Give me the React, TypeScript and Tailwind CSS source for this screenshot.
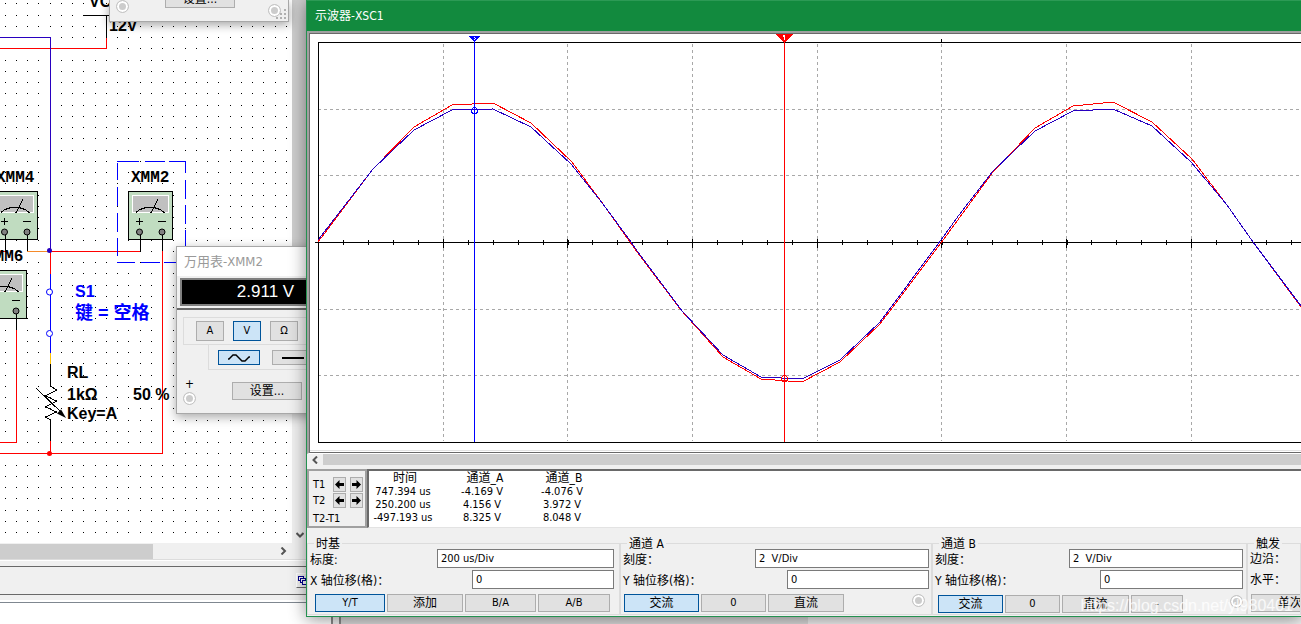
import type { ReactNode } from "react";
import { clsx } from "clsx";

// --- Shared controls ---
interface PushButtonProps {
  active?: boolean;
  className?: string;
  label?: string;
  children: ReactNode;
}

function PushButton({ active, className, label, children }: PushButtonProps) {
  return (
    <button
      type="button"
      aria-label={label}
      className={clsx(
        "flex shrink-0 items-center justify-center border",
        active
          ? "border-[#00549a] bg-[#cce4f7]"
          : "border-[#adadad] bg-[#e1e1e1]",
        className,
      )}
    >
      {children}
    </button>
  );
}

function Terminal({ name }: { name: string }) {
  return (
    <input
      type="radio"
      name={name}
      aria-label={name}
      defaultChecked
      className="size-[13px] shrink-0 appearance-none rounded-full border border-[#c4c4c4] bg-[#cccccc] shadow-[inset_0_0_0_2px_#ffffff]"
    />
  );
}

// --- Schematic ---
const gridDots = () => {
  let d = "";
  for (let i = 0; i < 26; i++) {
    for (let j = 0; j < 48; j++) {
      d += `M${Math.floor(5 + 11.25 * i)} ${Math.floor(3.75 + 11.25 * j)}h1v1h-1z`;
    }
  }
  return d;
};

function MeterSymbol({ x, y, name }: { x: number; y: number; name: string }) {
  return (
    <g transform={`translate(${x} ${y})`}>
      <text
        x="3"
        y="-9"
        className="font-['Liberation_Mono',monospace] text-[16px] font-bold"
      >
        {name}
      </text>
      <g shapeRendering="crispEdges" fill="none" stroke="#000">
        <rect x="0.5" y="0.5" width="44" height="48" fill="#c0dcc0" />
        <rect x="4.5" y="4.5" width="36" height="17" fill="#c0c0c0" stroke="#fff" />
        <path d="M8 21.5 12 18.500 18 16.500h8l6 2 5 3.500M22.5 22.5 30 8.5" />
        <path d="M8 30.5h7M11.5 27v7M30 30.5h8" />
        <path d="M12.5 44v16M34.5 44v16" />
      </g>
      <circle cx="11.5" cy="41" r="3" fill="#808080" stroke="#000" />
      <circle cx="34" cy="41" r="3" fill="#808080" stroke="#000" />
    </g>
  );
}

function Schematic() {
  return (
    <svg
      className="h-full w-full font-['Liberation_Sans',Arial,sans-serif] text-[16px] font-bold"
      role="img"
      aria-label="Circuit"
    >
      <path d={gridDots()} shapeRendering="crispEdges" />
      <g shapeRendering="crispEdges" fill="none">
        <path d="M83 15.5h27M106.5 15v22" stroke="#000" />
        <path d="M0 48.5h106.5v-11M0 251.5h5M50 251.5h90M50.5 252v22" stroke="#f00" />
        <path d="M0 37.5h50.5v213" stroke="#2800c0" />
        <path d="M27 251.5h22" stroke="#f58a2a" />
        <path d="M50.5 274v79" stroke="#00f" />
        <path d="M50.5 353v11" stroke="#ffc000" />
        <path d="M50.5 364v22M50.5 420v21M16.5 318v12" stroke="#000" />
        <path
          d="M50.5 441v12M0 453.5h162.5V251M0 442.5h16.5V330"
          stroke="#f00"
        />
        <path
          d="M50.5 386 56.5 390 45.5 396 56.5 401 45.5 407 56.5 412 45.5 417 50.5 420M36.5 388.5 62 413"
          stroke="#000"
        />
        <path
          d="M117 161.5h22M145 161.5h20M169 161.5h17M117 262.5h18M141 262.5h19M164 262.5h13"
          stroke="#00f"
        />
        <path
          d="M117.5 163v17M117.5 187v19M117.5 213v19M117.5 238v18M185.5 161v12M185.5 180v19M185.5 205v19M185.5 230v18"
          stroke="#00f"
        />
      </g>
      <path d="M66 418 57 413.5 61 409.5z" />
      <circle cx="49.5" cy="250.5" r="2.5" fill="#2800c0" />
      <circle cx="49.5" cy="453.5" r="2.5" fill="#f00" />
      <circle cx="49.5" cy="292" r="3" fill="#fff" stroke="#00f" />
      <circle cx="49.5" cy="333.5" r="3" fill="#fff" stroke="#00f" />
      <MeterSymbol x={128} y={191} name="XMM2" />
      <MeterSymbol x={-7} y={191} name="XMM4" />
      <MeterSymbol x={-18} y={270} name="XMM6" />
      <text x="89" y="7">VCC</text>
      <text x="109" y="31">12V</text>
      <text x="75" y="297" fill="#00f">S1</text>
      <text
        x="75"
        y="319"
        fill="#00f"
        className="font-['Liberation_Sans','Noto_Sans_CJK_SC',sans-serif] text-[18px]"
      >
        键 = 空格
      </text>
      <text x="67" y="378">RL</text>
      <text x="67" y="400">1kΩ</text>
      <text x="133" y="400">50 %</text>
      <text x="67" y="419">Key=A</text>
    </svg>
  );
}

function Editor() {
  return (
    <div className="flex h-full flex-col">
      <div className="flex min-h-0 flex-1">
        <div className="w-[292px] bg-white">
          <Schematic />
        </div>
        <div className="flex w-4 flex-col justify-between bg-[#f0f0f0]">
          <div className="h-80 bg-[#cdcdcd]" />
          <svg className="ml-1 h-4 w-2" viewBox="0 0 8 16" aria-hidden="true">
            <path d="M0.5 6 4 9.5 7.5 6" fill="none" stroke="#555" strokeWidth="2" />
          </svg>
        </div>
      </div>
      <div className="flex h-4 w-[292px] items-center justify-between">
        <div className="h-[15px] w-[153px] bg-[#cdcdcd]" />
        <svg className="mr-1 h-2 w-2" viewBox="0 0 8 8" aria-hidden="true">
          <path d="M1.5 0.5 5 4 1.5 7.5" fill="none" stroke="#555" strokeWidth="2" />
        </svg>
      </div>
      <div className="mb-[5px] h-0.5 border-t border-[#dcdcdc] bg-white" />
      <div className="flex h-[29px] border-y border-[#696969] pt-1.5 pl-[296px]">
        <button
          type="button"
          aria-label="Cascade"
          className="h-[15px] w-5 border-t border-l border-b border-t-white border-l-white border-b-[#696969]"
        >
          <svg className="h-3 w-3" viewBox="0 0 12 12" shapeRendering="crispEdges" aria-hidden="true">
            <g fill="#fff" stroke="#000090">
              <rect x="1.5" y="1.5" width="5" height="4" />
              <rect x="3.5" y="3.5" width="5" height="4" />
              <rect x="5.5" y="5.5" width="5" height="4" />
            </g>
          </svg>
        </button>
      </div>
      <div className="mt-[5px] h-0.5 bg-white" />
      <div className="flex h-[22px] border-t border-[#7f8790]">
        <div className="w-[331px] bg-white" />
        <div className="w-[10px] border-x-2 border-[#8a8a8a] bg-[#f0f0f0]" />
        <div className="w-[467px] bg-[#dadada]" />
        <div className="flex-1 bg-[#f0f0f0]" />
      </div>
    </div>
  );
}

// --- Multimeter windows ---
function MeterFooter({ id }: { id: string }) {
  return (
    <div className="flex h-[43px] shrink-0 items-start pr-[7px] pl-1.5">
      <div className="flex w-[13px] flex-col items-center">
        <span className="h-[22px] pt-1 text-[12px] leading-5">+</span>
        <Terminal name={`${id}-plus`} />
      </div>
      <PushButton className="mt-3 ml-9 h-[18px] w-[70px] text-[12px] leading-4">
        设置...
      </PushButton>
      <div className="mt-[22px] ml-auto">
        <Terminal name={`${id}-minus`} />
      </div>
    </div>
  );
}

function MeterWindow() {
  return (
    <section className="absolute top-[246px] left-[176px] flex w-[178px] flex-col border border-[#a8a8a8] bg-[#f0f0f0] shadow-[0_3px_10px_rgba(0,0,0,0.35)]">
      <h2 className="h-[29px] bg-white pl-[7px] text-[13px] leading-[29px] text-[#999999]">
        万用表-XMM2
      </h2>
      <div className="border-b-2 border-[#696969] p-0.5 pl-[3px]">
        <div className="h-7 border-2 border-[#808080] bg-black text-center font-['Liberation_Sans',Arial,sans-serif] text-[17px] leading-6 text-white">
          2.911 V
        </div>
      </div>
      <div className="mt-[7px] ml-1.5 flex h-7 gap-[9px] border border-[#dcdcdc] pt-[3px] pl-3 text-[11px]">
        <PushButton className="h-5 w-7">A</PushButton>
        <PushButton active className="h-5 w-7">V</PushButton>
        <PushButton className="h-5 w-7">Ω</PushButton>
      </div>
      <div className="ml-[31px] flex h-[25px] gap-3 border-b border-l border-[#dcdcdc] pt-[5px] pl-[9px]">
        <PushButton active label="AC" className="h-[15px] w-[42px]">
          <svg className="h-2.5 w-[22px]" viewBox="0 0 22 10" aria-hidden="true">
            <path d="M0 6h1l4-4h3l6 6h3l4-4h1" fill="none" stroke="#000" strokeWidth="1.4" />
          </svg>
        </PushButton>
        <PushButton label="DC" className="h-[15px] w-[42px]">
          <svg className="h-0.5 w-[22px]" viewBox="0 0 22 2" aria-hidden="true">
            <path d="M0 1h22" stroke="#000" strokeWidth="2" />
          </svg>
        </PushButton>
      </div>
      <MeterFooter id="xmm2" />
    </section>
  );
}

function HiddenMeterWindow() {
  return (
    <section className="absolute top-0 left-[109px] flex h-[22px] w-[180px] flex-col justify-end overflow-hidden border border-t-0 border-[#a8a8a8] bg-[#f0f0f0] shadow-[0_3px_10px_rgba(0,0,0,0.35)]">
      <MeterFooter id="meter" />
      <svg
        className="absolute right-0.5 bottom-0.5 size-2.5"
        viewBox="0 0 10 10"
        fill="#b0b0b0"
        aria-hidden="true"
      >
        <path d="M8 0h2v2h-2zM4 4h2v2h-2zM8 4h2v2h-2zM0 8h2v2h-2zM4 8h2v2h-2zM8 8h2v2h-2z" />
      </svg>
    </section>
  );
}

// --- Oscilloscope ---
const CHANNEL_A =
  "8,208 63,135 104,93 142,71 183,69 221,89 262,128 293,170 320,208 330,222 371,276 413,323 451,345 492,348 530,328 570,290 631,209 650,183 683,138 725,94 763,72 803,68 842,88 882,125 917,171 943,208 991,273";
const CHANNEL_B =
  "8,206 63,135 104,96 142,76 183,75 221,93 261,130 293,170 321,208 330,221 373,278 413,321 451,343 492,345 530,326 570,288 631,206 649,181 683,137 725,97 763,77 803,75 842,92 881,128 917,171 943,208 991,272";
const DIVISIONS = [133, 257, 382, 507, 631, 756, 881];

function Plot() {
  const ticks = Array.from({ length: 40 }, (_, i) => Math.round(8 + 24.95 * i));

  return (
    <svg
      className="block h-[418px] w-full bg-white"
      shapeRendering="crispEdges"
      fill="none"
      role="img"
      aria-label="XSC1"
    >
      <g stroke="#a8a8a8" strokeDasharray="3 3">
        {DIVISIONS.map((x) => (
          <path key={x} d={`M${x}.5 10v397`} />
        ))}
        {[75, 141, 275, 341].map((y) => (
          <path key={y} d={`M8 ${y}.5h2000`} />
        ))}
      </g>
      <g stroke="#000">
        <path d="M2008 8.5H8.5v400H2008M5 208.5h2000M631.5 5v4" />
        {ticks.map((x) => (
          <path key={x} d={`M${x}.5 206v5`} />
        ))}
        {DIVISIONS.map((x) => (
          <path key={x} d={`M${x}.5 205v9`} />
        ))}
      </g>
      <path d="M0 416.5h2000" stroke="#e3e3e3" />
      <polyline points={CHANNEL_A} stroke="#f00" />
      <polyline points={CHANNEL_B} stroke="#2800c0" />
      <path d="M164.5 8v400" stroke="#00f" />
      <path d="M474.5 8v400" stroke="#f00" />
      <path d="M158 2h13l-6.500 6z" fill="#00f" />
      <path d="M466 0h17l-8.500 9z" fill="#f00" />
      <path d="M164 3h1v1h-1zM165 4h1v1h-1zM164 5h1v1h-1z" fill="#fff" />
      <path d="M473 1h2v5h-1v-3h-1z" fill="#fff" />
      <circle cx="164.500" cy="76.500" r="3" stroke="#00f" />
      <circle cx="474.500" cy="344.500" r="3" stroke="#f00" />
    </svg>
  );
}

function ArrowButton({ dir, label }: { dir: "left" | "right"; label: string }) {
  return (
    <PushButton label={label} className="h-[15px] w-[13px]">
      <svg className="size-[9px]" viewBox="0 0 9 9" aria-hidden="true">
        <path
          d={
            dir === "left"
              ? "M0 4.500 4.500 0v3H9v3H4.500v3z"
              : "M9 4.500 4.500 0v3H0v3h4.500v3z"
          }
        />
      </svg>
    </PushButton>
  );
}

const READINGS = [
  ["747.394 us", "-4.169 V", "-4.076 V"],
  ["250.200 us", "4.156 V", "3.972 V"],
  ["-497.193 us", "8.325 V", "8.048 V"],
];

function Readout() {
  return (
    <div className="flex h-[59px]">
      <div className="flex w-[60px] shrink-0 flex-col border-2 border-[#a0a0a0] pt-1.5 pl-1 text-[11px]">
        {["T1", "T2"].map((cursor) => (
          <div key={cursor} className="flex h-[17px] items-start gap-1 leading-[15px]">
            <span className="w-4">{cursor}</span>
            <ArrowButton dir="left" label={`${cursor} left`} />
            <ArrowButton dir="right" label={`${cursor} right`} />
          </div>
        ))}
        <span className="pt-0.5 leading-[15px]">T2-T1</span>
      </div>
      <div className="flex-1 border-t-2 border-l-2 border-b border-t-[#696969] border-l-[#696969] border-b-[#e3e3e3] bg-white pt-px">
        <table className="table-fixed border-collapse text-center text-[11px] leading-[13px]">
          <thead>
            <tr className="text-[12px] leading-[13px]">
              <th className="w-[68px] p-0 pl-1 font-normal">时间</th>
              <th className="w-[90px] p-0 pl-1.5 font-normal">通道_A</th>
              <th className="w-[70px] p-0 pl-1 font-normal">通道_B</th>
            </tr>
          </thead>
          <tbody>
            {READINGS.map((row) => (
              <tr key={row[0]}>
                {row.map((value) => (
                  <td key={value} className="p-0 whitespace-nowrap">
                    {value}
                  </td>
                ))}
              </tr>
            ))}
          </tbody>
        </table>
      </div>
    </div>
  );
}

interface FieldProps {
  id: string;
  label: string;
  value: string;
  className: string;
}

function Field({ id, label, value, className }: FieldProps) {
  return (
    <div className="flex h-[19px] items-center justify-between">
      <label htmlFor={id} className="pt-0.5 text-[12px] whitespace-nowrap">
        {label}
      </label>
      <input
        id={id}
        type="text"
        defaultValue={value}
        className={clsx(
          "h-[19px] border border-[#7a7a7a] bg-white px-[3px] text-[11px]",
          className,
        )}
      />
    </div>
  );
}

function Group({
  title,
  className,
  children,
}: {
  title: string;
  className: string;
  children: ReactNode;
}) {
  return (
    <fieldset
      className={clsx(
        "flex min-w-0 flex-col gap-0.5 border border-[#dcdcdc] pl-0.5",
        className,
      )}
    >
      <legend className="ml-1 h-3 px-0.5 text-[12px] leading-[14px]">{title}</legend>
      {children}
    </fieldset>
  );
}

function Controls() {
  return (
    <div className="flex h-[88px] overflow-hidden pt-[9px] pb-px">
      <Group title="时基" className="w-[313px] shrink-0 pr-[5px]">
        <Field id="time-scale" label="标度:" value="200 us/Div" className="w-[177px]" />
        <Field id="x-offset" label="X 轴位移(格)：" value="0" className="w-[142px]" />
        <div className="mt-[3px] ml-[5px] flex gap-0.5 text-[11px]">
          <PushButton active className="h-[18px] w-[70px]">Y/T</PushButton>
          <PushButton className="h-[18px] w-[76px] text-[12px]">添加</PushButton>
          <PushButton className="h-[18px] w-[71px]">B/A</PushButton>
          <PushButton className="h-[18px] w-[72px]">A/B</PushButton>
        </div>
      </Group>
      <Group title="通道 A" className="w-[312px] shrink-0 pr-0.5">
        <Field id="a-scale" label="刻度：" value="2  V/Div" className="w-[174px]" />
        <Field id="a-offset" label="Y 轴位移(格)：" value="0" className="w-[142px]" />
        <div className="mt-[3px] ml-px flex items-start gap-0.5 text-[11px]">
          <PushButton active className="h-[18px] w-[75px] text-[12px]">交流</PushButton>
          <PushButton className="h-[18px] w-[65px]">0</PushButton>
          <PushButton className="h-[18px] w-[76px] text-[12px]">直流</PushButton>
          <div className="mr-1 ml-auto">
            <Terminal name="channel-a" />
          </div>
        </div>
      </Group>
      <Group title="通道 B" className="w-[315px] shrink-0 pr-[3px]">
        <Field id="b-scale" label="刻度：" value="2  V/Div" className="w-[174px]" />
        <Field id="b-offset" label="Y 轴位移(格)：" value="0" className="w-[143px]" />
        <div className="mt-1 ml-[3px] flex items-start gap-0.5 text-[11px]">
          <PushButton active className="h-[18px] w-[65px] text-[12px]">交流</PushButton>
          <PushButton className="h-[18px] w-[55px]">0</PushButton>
          <PushButton className="h-[18px] w-[67px] text-[12px]">直流</PushButton>
          <PushButton className="h-[18px] w-[52px]">-</PushButton>
          <div className="ml-auto">
            <Terminal name="channel-b" />
          </div>
        </div>
      </Group>
      <Group title="触发" className="flex-1 overflow-hidden">
        <span className="h-[19px] pt-px text-[12px] leading-[19px]">边沿：</span>
        <span className="h-[19px] pt-px text-[12px] leading-[19px]">水平：</span>
        <PushButton className="mt-[3px] ml-px h-[18px] w-[78px] text-[12px]">
          单次
        </PushButton>
      </Group>
    </div>
  );
}

function Oscilloscope() {
  return (
    <section className="absolute top-0 right-0 left-[306px] border-b border-l border-[#249150] bg-[#f0f0f0] shadow-[0_2px_16px_rgba(0,0,0,0.45)]">
      <h1 className="h-[31px] border-t border-[#2c9a55] bg-[#128a3e] pl-2 text-[12px] leading-[31px] text-white">
        示波器-XSC1
      </h1>
      <div className="border-t-2 border-l-2 border-b border-t-[#a0a0a0] border-l-[#a0a0a0] border-b-white">
        <div className="border-t border-b border-l border-[#696969]">
          <Plot />
        </div>
      </div>
      <div className="mb-1 flex h-[11px] items-center">
        <svg className="mr-1 ml-1 h-2 w-2" viewBox="0 0 8 8" aria-hidden="true">
          <path d="M6 0.500 2.500 4 6 7.500" fill="none" stroke="#555" strokeWidth="2" />
        </svg>
        <div className="h-full flex-1 bg-[#cdcdcd]" />
      </div>
      <Readout />
      <Controls />
    </section>
  );
}

export default function App() {
  return (
    <main className="relative h-screen min-h-[620px] overflow-hidden bg-[#f0f0f0] font-['DejaVu_Sans_Condensed','Noto_Sans_CJK_SC',sans-serif] text-black">
      <Editor />
      <MeterWindow />
      <HiddenMeterWindow />
      <Oscilloscope />
      <p className="absolute right-2 bottom-1.5 font-['Liberation_Sans',Arial,sans-serif] text-[16px] leading-6 text-white/80">
        https://blog.csdn.net/yl980401
      </p>
    </main>
  );
}
